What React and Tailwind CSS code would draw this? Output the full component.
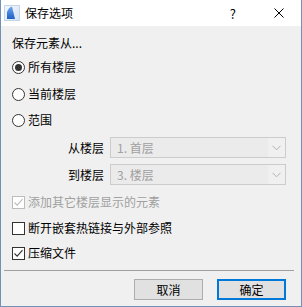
import React from "react";

const font = { fontFamily: '"Noto Sans CJK SC", "Noto Sans", sans-serif' };

function Radio({ checked, label }) {
  return (
    <div className="flex h-[24px] items-center pl-[11px]">
      <div className="flex h-[13px] w-[13px] items-center justify-center rounded-full border border-[#333333] bg-white">
        {checked && <div className="h-[7px] w-[7px] rounded-full bg-[#333333]" />}
      </div>
      <span className="ml-[3px] text-[12px] leading-none text-black">{label}</span>
    </div>
  );
}

function Check({ checked, disabled, label }) {
  const c = disabled ? "#bcbcbc" : "#333333";
  return (
    <div className="flex h-[24px] items-center pl-[11px]">
      <div
        className={
          "flex h-[13px] w-[13px] items-center justify-center border bg-white " +
          (disabled ? "border-[#bcbcbc]" : "border-[#333333]")
        }
      >
        {checked && (
          <svg width="11" height="11" viewBox="0 0 11 11">
            <path d="M1.5 5.5 L4.2 8.2 L9.5 2.2" fill="none" stroke={c} strokeWidth="1.1" />
          </svg>
        )}
      </div>
      <span
        className={
          "ml-[3px] text-[12px] leading-none " + (disabled ? "text-[#a0a0a0]" : "text-black")
        }
      >
        {label}
      </span>
    </div>
  );
}

function Select({ label, value }) {
  return (
    <div className="flex h-[21px] items-center">
      <span className="w-[103px] text-right text-[12px] leading-none text-black">{label}</span>
      <div className="ml-[6px] flex h-[21px] w-[176px] border border-[#cccccc] bg-[#eeeeee]">
        <div className="flex flex-1 items-center bg-[#ebebeb] pl-[6px] text-[12px] leading-none text-[#a0a0a0]">
          {value}
        </div>
        <div className="flex w-[17px] items-center justify-center bg-[#f0f0f0]">
          <svg width="9" height="6" viewBox="0 0 9 6">
            <path d="M0.5 0.8 L4.5 4.8 L8.5 0.8" fill="none" stroke="#b0b0b0" strokeWidth="1" />
          </svg>
        </div>
      </div>
    </div>
  );
}

export default function App() {
  return (
    <div
      className="flex h-[307px] w-[302px] flex-col border-x border-b border-[#7390b6] bg-[#f0f0f0]"
      style={font}
    >
      <div className="flex h-[26px] items-center bg-white">
        <svg className="ml-[3px]" width="16" height="16" viewBox="0 0 16 16">
          <defs>
            <linearGradient id="bg" x1="0" y1="0" x2="1" y2="1">
              <stop offset="0" stopColor="#f4f8fd" />
              <stop offset="1" stopColor="#d3e2f3" />
            </linearGradient>
            <linearGradient id="fg" x1="0" y1="0" x2="0" y2="1">
              <stop offset="0" stopColor="#6fa8ee" />
              <stop offset="1" stopColor="#1d5fc4" />
            </linearGradient>
          </defs>
          <rect x="0.5" y="0.5" width="15" height="15" fill="url(#bg)" stroke="#c4d5ea" />
          <path d="M3 14 L3 7 Q5 2 8 1.5 L11 14 Z" fill="url(#fg)" />
        </svg>
        <span className="ml-[5px] text-[12px] leading-none text-black">保存选项</span>
        <span className="ml-auto mr-[38px] text-[13px] leading-none text-black">?</span>
        <svg className="mr-[17px]" width="10" height="10" viewBox="0 0 10 10">
          <path d="M0.5 0.5 L9.5 9.5 M9.5 0.5 L0.5 9.5" stroke="#000" strokeWidth="1" />
        </svg>
      </div>

      <div className="mt-[5px] flex h-[24px] items-center pl-[11px] text-[12px] leading-none text-black">
        保存元素从...
      </div>

      <Radio checked label="所有楼层" />
      <div className="mt-[3px]">
        <Radio label="当前楼层" />
      </div>
      <div className="mt-[2px]">
        <Radio label="范围" />
      </div>

      <div className="mt-[5px]">
        <Select label="从楼层" value="1. 首层" />
      </div>
      <div className="mt-[6px]">
        <Select label="到楼层" value="3. 楼层" />
      </div>

      <div className="mt-[5px]">
        <Check checked disabled label="添加其它楼层显示的元素" />
      </div>
      <div className="mt-[2px]">
        <Check label="断开嵌套热链接与外部参照" />
      </div>
      <div className="mt-[1px]">
        <Check checked label="压缩文件" />
      </div>

      <div className="ml-[3px] mt-[5px] h-px w-[290px] bg-[#a0a0a0]" />

      <div className="mt-[8px] flex">
        <button className="ml-[133px] flex h-[21px] w-[69px] items-center justify-center border border-[#adadad] bg-[#e1e1e1] text-[12px] leading-none text-black">
          取消
        </button>
        <button className="ml-[14px] flex h-[21px] w-[69px] items-center justify-center border-2 border-[#0078d7] bg-[#e1e1e1] text-[12px] leading-none text-black">
          确定
        </button>
      </div>
    </div>
  );
}
